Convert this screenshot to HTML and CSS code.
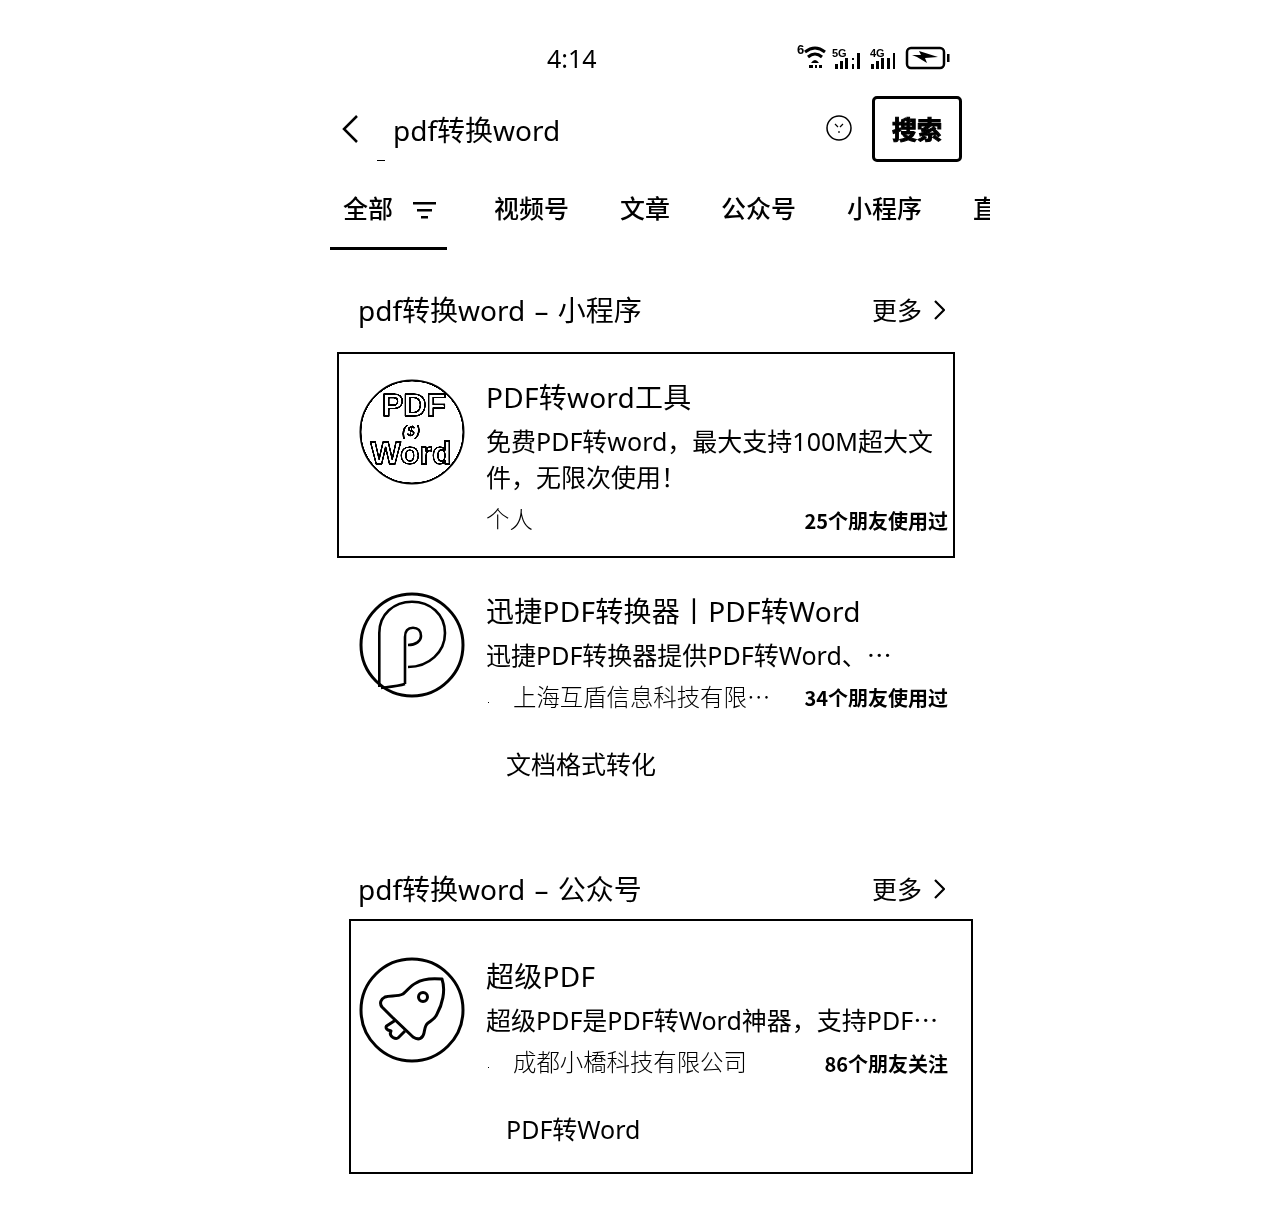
FILE: index.html
```html
<!DOCTYPE html>
<html lang="zh-CN">

<head>
    <meta charset="UTF-8">
    <title>pdf转换word</title>
    <link rel="stylesheet" href="styles.css">
</head>

<body>
    <div class="page">
        <!-- 状态栏 -->
        <div class="status">
            <span class="time">4:14</span>
            <svg class="status-icons" width="154" height="28" viewBox="0 0 154 28">
                <text x="0" y="11" class="net net-six">6</text>
                <path d="M8 9 Q18 1 28 9 M11 14 Q18 8 25 14" fill="none" stroke="#000" stroke-width="3"/>
                <path d="M14 20 Q18 14 22 20 Z M12 22h4v3h-4z M18 22h2v3h-2z M22 22h3v3h-3z" fill="#000"/>
                <text x="35" y="14" class="net">5G</text>
                <path d="M38 21h3v5h-3zM43 18h3v8h-3zM48 15h3v11h-3zM55 15h2v2h-2zM55 21h2v5h-2zM60 10h3v16h-3z" fill="#000"/>
                <text x="73" y="14" class="net">4G</text>
                <path d="M74 21h3v5h-3zM79 18h3v8h-3zM84 15h3v11h-3zM90 15h3v11h-3zM96 10h2v16h-2z" fill="#000"/>
                <rect x="110" y="5" width="37" height="20" rx="4" fill="none" stroke="#000" stroke-width="2.500"/>
                <path d="M115 12 L124 12 L122 8 L141 14 L128 15 L130 20 L120 14 Z" fill="#000"/>
                <rect x="150" y="11" width="2.500" height="8" fill="#000"/>
            </svg>
        </div>

        <!-- 搜索栏 -->
        <div class="search">
            <svg class="back" width="18" height="30" viewBox="0 0 18 30">
                <path d="M16 2 L3 15 L16 28" fill="none" stroke="#000" stroke-width="2.500"/>
            </svg>
            <span class="query">pdf转换word</span>
            <span class="caret"></span>
            <svg class="clear" width="28" height="28" viewBox="0 0 28 28">
                <circle cx="14" cy="14" r="12" fill="none" stroke="#000" stroke-width="1.500"/>
                <path d="M10 10 L13 13 M18 10 L15 13 M14 17 L14 19" stroke="#000" stroke-width="1.200"/>
            </svg>
            <div class="search-btn">搜索</div>
        </div>

        <!-- 分类 -->
        <div class="tabs">
            <div class="tab tab-on">
                <span>全部</span>
                <svg width="23" height="20" viewBox="0 0 23 20">
                    <path d="M0 3h23v2.500h-23zM4 10h15v2.500h-15zM8 17h7v2.500h-7z" fill="#000"/>
                </svg>
            </div>
            <div class="tab">视频号</div>
            <div class="tab">文章</div>
            <div class="tab">公众号</div>
            <div class="tab">小程序</div>
            <div class="tab">直播</div>
        </div>

        <!-- 小程序 -->
        <div class="sec-head sec-first">
            <span class="sec-title">pdf转换word – 小程序</span>
            <span class="more">更多
                <svg width="12" height="22" viewBox="0 0 12 22">
                    <path d="M2 2 L11 11 L2 20" fill="none" stroke="#000" stroke-width="2.200"/>
                </svg>
            </span>
        </div>

        <div class="item card-one">
            <svg class="logo" width="106" height="106" viewBox="0 0 106 106">
                <circle cx="53" cy="53" r="51.500" fill="#fff" stroke="#000" stroke-width="2"/>
                <text x="55" y="37" class="logo-big">PDF</text>
                <text x="52" y="57" class="logo-s">($)</text>
                <text x="52" y="85" class="logo-big">Word</text>
            </svg>
            <div class="info">
                <div class="name">PDF转word工具</div>
                <div class="desc desc-first">免费PDF转word，最大支持100M超大文件，无限次使用！</div>
                <div class="meta meta-one">
                    <span class="owner">个人</span>
                    <span class="friends">25个朋友使用过</span>
                </div>
            </div>
        </div>

        <div class="item item-two">
            <svg class="logo" width="106" height="106" viewBox="0 0 106 106">
                <circle cx="53" cy="53" r="51" fill="none" stroke="#000" stroke-width="3"/>
                <path d="M20.300 95 V41 C20.300 22 35 9.700 53 9.700 C71 9.700 86 22 86 41 C86 60 70 75 49 75" fill="none" stroke="#000" stroke-width="2.600"/>
                <path d="M46 92 V45 C46 39 49 35.700 54 35.700 C59 35.700 62 39 62 44 C62 49 57 53 49 53 M22 96 C30 95 40 94 46 92" fill="none" stroke="#000" stroke-width="2.600"/>
            </svg>
            <div class="info">
                <div class="name">迅捷PDF转换器丨PDF转Word</div>
                <div class="desc">迅捷PDF转换器提供PDF转Word、<span class="cjk">…</span></div>
                <div class="meta">
                    <span class="owner owner-dot">上海互盾信息科技有限<span class="cjk">…</span></span>
                    <span class="friends">34个朋友使用过</span>
                </div>
                <div class="tag">文档格式转化</div>
            </div>
        </div>

        <!-- 公众号 -->
        <div class="sec-head sec-second">
            <span class="sec-title">pdf转换word – 公众号</span>
            <span class="more">更多
                <svg width="12" height="22" viewBox="0 0 12 22">
                    <path d="M2 2 L11 11 L2 20" fill="none" stroke="#000" stroke-width="2.200"/>
                </svg>
            </span>
        </div>

        <div class="item card-two">
            <svg class="logo" width="106" height="106" viewBox="0 0 106 106">
                <circle cx="53" cy="53" r="51" fill="none" stroke="#000" stroke-width="3"/>
                <path d="M83 22 C72 21 63 22 57 26 C51 29 48 34 44 37 C38 40 31 38 26 40 C22 42 20 46 23 50 L33 60 L54 80 C60 84 64 81 65 76 C66 71 66 68 69 66 C73 63 76 62 78 57 C83 48 87 34 83 22 Z" fill="none" stroke="#000" stroke-width="3" stroke-linejoin="round"/>
                <path d="M36 63.500 L27.500 69 Q26 71 29 73 L32 74 Q30 78 34 80.500 Q37.500 82.500 39.500 80.500 L46 74" fill="none" stroke="#000" stroke-width="3" stroke-linejoin="round"/>
                <circle cx="64" cy="40" r="4.500" fill="none" stroke="#000" stroke-width="3"/>
            </svg>
            <div class="info">
                <div class="name">超级PDF</div>
                <div class="desc">超级PDF是PDF转Word神器，支持PDF<span class="cjk">…</span></div>
                <div class="meta">
                    <span class="owner owner-dot">成都小橋科技有限公司</span>
                    <span class="friends">86个朋友关注</span>
                </div>
                <div class="tag">PDF转Word</div>
            </div>
        </div>
    </div>
</body>

</html>
```

FILE: styles.css
```css
* {
    margin: 0;
    padding: 0;
    box-sizing: border-box;
}

body {
    background-color: #fff;
    color: #000;
    font-family: "Noto Sans", "Noto Sans CJK SC", sans-serif;
    filter: grayscale(1) contrast(3);
}

.cjk {
    font-family: "Noto Sans CJK SC", sans-serif;
    line-height: 0;
}

.page {
    width: 660px;
    height: 1226px;
    margin-left: 330px;
    overflow: hidden;
}

/* 状态栏 */
.status {
    display: flex;
    align-items: center;
    height: 96px;
    padding: 20px 0 0 217px;
}

.time {
    font-size: 25px;
    line-height: 36px;
}

.status-icons {
    margin-left: 200px;
    margin-top: -2px;
}

.net {
    font-family: "Liberation Sans", sans-serif;
    font-size: 11px;
    font-weight: bold;
}

.net-six {
    font-size: 13px;
}

/* 搜索栏 */
.search {
    position: relative;
    display: flex;
    align-items: center;
    height: 66px;
    padding-left: 11px;
}

.back {
    flex: none;
}

.query {
    width: 432px;
    margin-left: 34px;
    padding-top: 1px;
    font-size: 28px;
    line-height: 40px;
}

.caret {
    position: absolute;
    left: 47px;
    top: 64px;
    width: 8px;
    height: 1px;
    background-color: #000;
}

.clear {
    flex: none;
    margin-top: -2px;
}

.search-btn {
    width: 90px;
    height: 66px;
    margin-left: 19px;
    border: 3px solid #000;
    border-radius: 5px;
    font-size: 25px;
    font-weight: 700;
    line-height: 60px;
    text-align: center;
    -webkit-text-stroke: 1px #000;
}

/* 分类 */
.tabs {
    display: flex;
    height: 88px;
}

.tab {
    flex: none;
    margin-right: 51px;
    padding-top: 28px;
    font-size: 25px;
    font-weight: 500;
    line-height: 36px;
    white-space: nowrap;
}

.tab-on {
    display: flex;
    align-items: flex-start;
    width: 117px;
    height: 88px;
    margin-right: 47px;
    padding-left: 13px;
    border-bottom: 3px solid #000;
}

.tab-on svg {
    margin: 9px 0 0 20px;
}

/* 分组标题 */
.sec-head {
    display: flex;
    justify-content: space-between;
    align-items: center;
    height: 40px;
    padding: 0 45px 0 28px;
}

.sec-first {
    margin-top: 40px;
}

.sec-second {
    margin-top: 87px;
}

.sec-title {
    font-size: 28px;
    line-height: 40px;
    word-spacing: 2px;
}

.more {
    display: flex;
    align-items: center;
    gap: 11px;
    font-size: 25px;
    line-height: 40px;
}

/* 结果项 */
.item {
    display: flex;
    gap: 21px;
}

.logo {
    flex: none;
}

.info {
    flex: 1;
    min-width: 0;
}

.card-one {
    width: 618px;
    height: 206px;
    margin: 22px 0 0 7px;
    padding: 25px 5px 0 20px;
    border: 2px solid #000;
}

.item-two {
    width: 589px;
    margin: 35px 0 0 29px;
}

.item-two .logo {
    margin-top: -1px;
}

.card-two {
    width: 624px;
    height: 255px;
    margin: 10px 0 0 19px;
    padding: 36px 23px 0 8px;
    border: 2px solid #000;
}

.card-two .info {
    padding-top: 1px;
}

.logo-big {
    font-family: "Liberation Sans", sans-serif;
    font-size: 32px;
    font-weight: bold;
    fill: #fff;
    stroke: #000;
    stroke-width: 1.700;
    text-anchor: middle;
}

.logo-s {
    font-family: "Liberation Sans", sans-serif;
    font-size: 15px;
    font-weight: bold;
    font-style: italic;
    text-anchor: middle;
}

.name {
    font-size: 28px;
    line-height: 36px;
    letter-spacing: 0.250px;
    white-space: nowrap;
}

.desc {
    margin-top: 8px;
    font-size: 25px;
    line-height: 36px;
}

.desc-first {
    padding-right: 12px;
}

.meta {
    display: flex;
    justify-content: space-between;
    align-items: flex-start;
    margin-top: 6px;
    height: 36px;
}

.owner {
    font-size: 23.400px;
    font-weight: 300;
    line-height: 36px;
    white-space: nowrap;
}

.owner-dot {
    position: relative;
    padding-left: 27px;
}

.owner-dot::before {
    content: "";
    position: absolute;
    left: 2px;
    top: 23px;
    width: 1px;
    height: 1px;
    background-color: #000;
}

.friends {
    margin-top: 2px;
    font-family: "Noto Sans CJK SC", sans-serif;
    font-size: 20px;
    font-weight: 700;
    line-height: 36px;
}

.item-two .friends {
    margin-top: 1px;
}

.tag {
    margin: 31px 0 0 20px;
    font-size: 25px;
    line-height: 36px;
}
```
